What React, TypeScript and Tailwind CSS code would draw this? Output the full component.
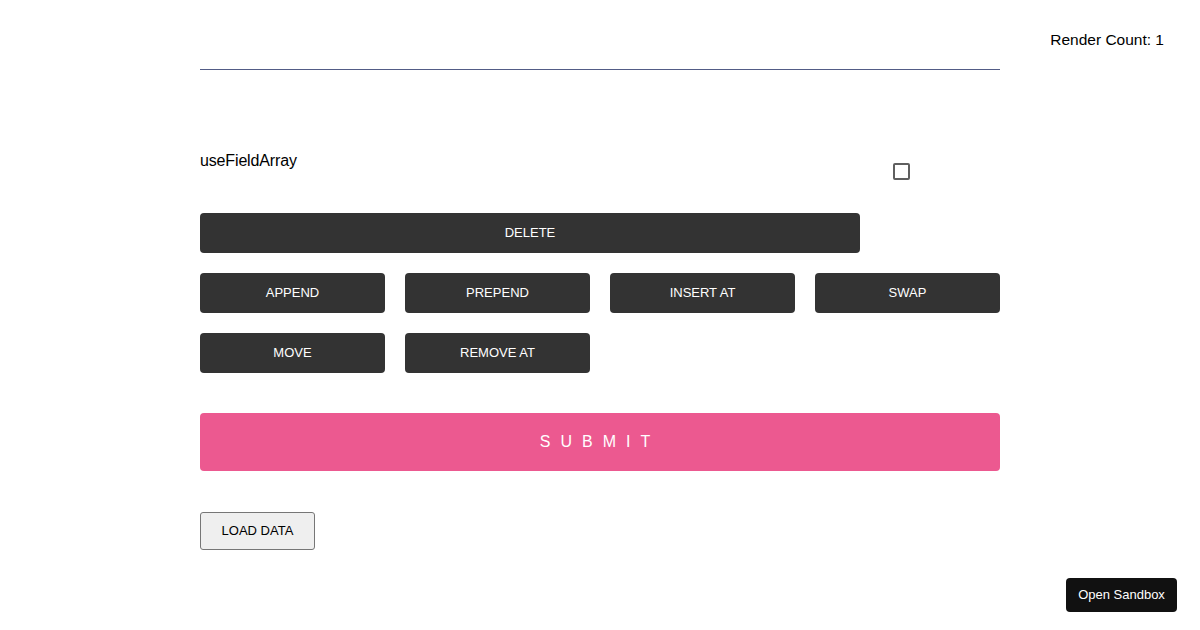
export default function App() {
  const row2 = ["APPEND", "PREPEND", "INSERT AT", "SWAP"];
  const row3 = ["MOVE", "REMOVE AT"];

  return (
    <div className="relative h-[630px] w-full bg-white text-black font-['Liberation_Sans',Arial,sans-serif]">
      <div className="absolute right-[36px] top-[30px] text-[15.5px] leading-[20px]">Render Count: 1</div>

      <div className="mx-auto w-[800px] pt-[69px]">
        <div className="h-px bg-[#525c86]" />

        <div className="mt-[82px] flex items-start">
          <div className="w-[693px] text-[16px] leading-[18px] tracking-[-0.15px]">useFieldArray</div>
          <div className="mt-[11px] h-[17px] w-[17px] rounded-[2px] border-2 border-[#5f5f5f] bg-white" />
        </div>

        <button className="mt-[33px] block h-[40px] w-[660px] rounded-[4px] bg-[#333333] text-[13px] text-white">
          DELETE
        </button>

        <div className="mt-[20px] grid grid-cols-4 gap-[20px]">
          {row2.map((t) => (
            <button key={t} className="h-[40px] rounded-[4px] bg-[#333333] text-[13px] text-white">
              {t}
            </button>
          ))}
        </div>

        <div className="mt-[20px] grid grid-cols-4 gap-[20px]">
          {row3.map((t) => (
            <button key={t} className="h-[40px] rounded-[4px] bg-[#333333] text-[13px] text-white">
              {t}
            </button>
          ))}
        </div>

        <button className="mt-[40px] block h-[58px] w-full rounded-[4px] bg-[#ec5990] text-[16px] tracking-[10px] text-white">
          SUBMIT
        </button>

        <button className="mt-[41px] block h-[38px] w-[115px] rounded-[3px] border border-[#767676] bg-[#efefef] text-[13px] text-black">
          LOAD DATA
        </button>
      </div>

      <button className="absolute bottom-[18px] right-[23px] h-[34px] w-[111px] rounded-[4px] bg-[#111111] text-[13px] text-white">
        Open Sandbox
      </button>
    </div>
  );
}
